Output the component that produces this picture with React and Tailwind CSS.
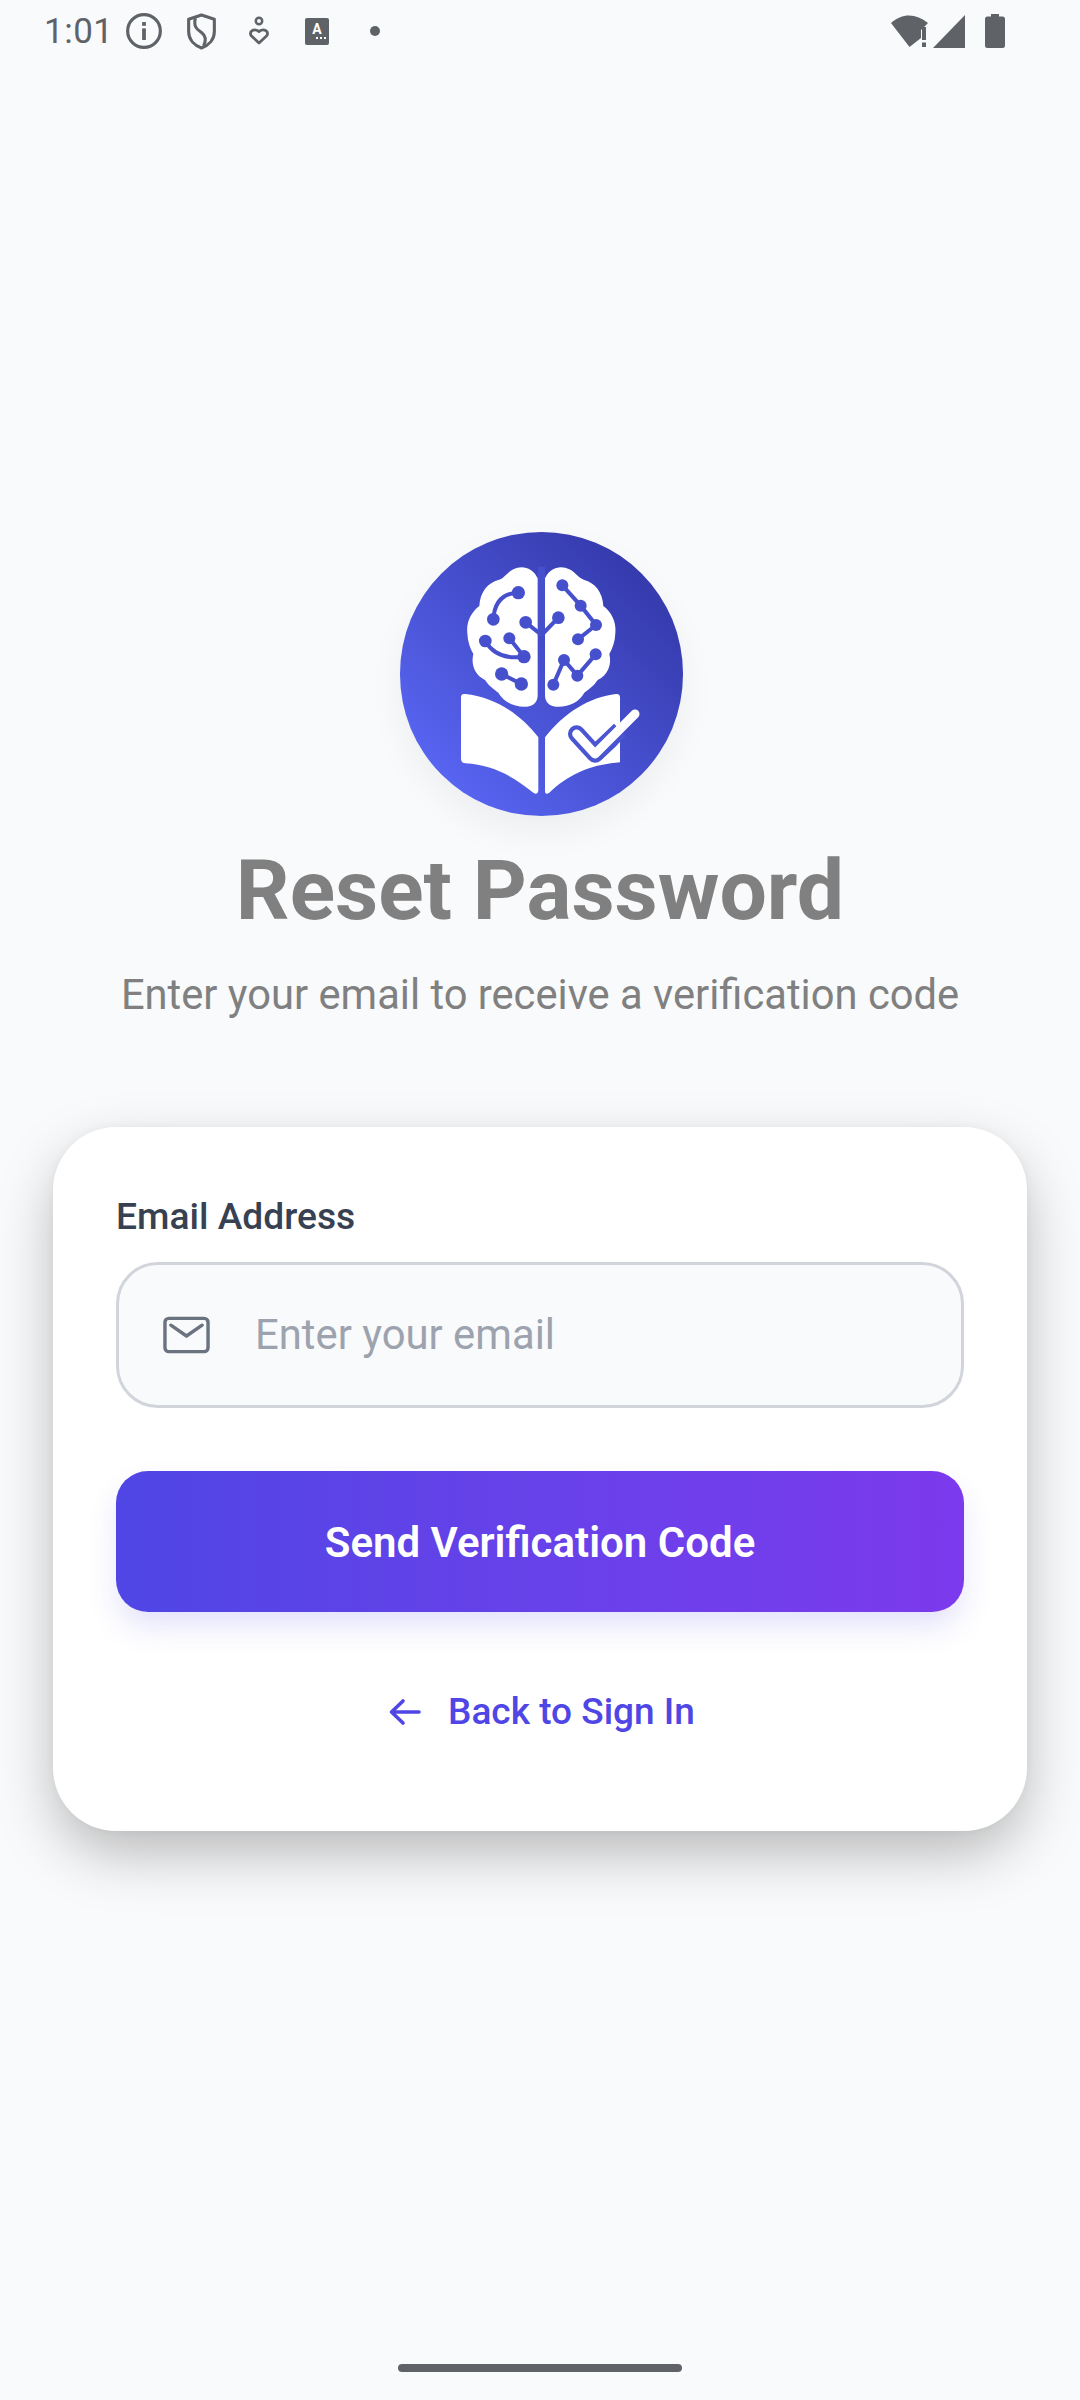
import React from 'react';

const roboto = { fontFamily: 'Roboto, sans-serif' };

// Android status bar glyphs
const StatusBar = () => (
	<div className="flex items-center h-[62px] pl-[44px] pr-[75px] text-[#5f6368]">
		<span className="text-[35px] leading-none tracking-[0.5px] w-[81px]">1:01</span>
		<svg width="38" height="38" viewBox="0 0 36 36">
			<circle cx="18" cy="18" r="15.5" fill="none" stroke="currentColor" strokeWidth="3" />
			<rect x="16.2" y="15.5" width="3.6" height="11" fill="currentColor" />
			<rect x="16.2" y="9.5" width="3.6" height="3.6" fill="currentColor" />
		</svg>
		<svg width="31" height="37" viewBox="0 0 30 36" className="ml-[23px]">
			<path d="M15 2 L27.5 6 V18 C27.5 26 22 31.5 15 34 C8 31.5 2.5 26 2.5 18 V6 Z" fill="none" stroke="currentColor" strokeWidth="3" strokeLinejoin="round" />
			<path d="M9 5 C7 14 11 16 15 19 C19 22 20 26 17 32" fill="none" stroke="currentColor" strokeWidth="3" />
		</svg>
		<svg width="20" height="30" viewBox="0 0 20 30" className="ml-[32px]">
			<circle cx="10" cy="5" r="3.2" fill="none" stroke="currentColor" strokeWidth="2.5" />
			<path d="M10 27 L2 19.5 C0 15 5 12 10 15.5 C15 12 20 15 18 19.5 Z" fill="none" stroke="currentColor" strokeWidth="2.8" strokeLinejoin="round" />
		</svg>
		<div className="ml-[36px] w-[24px] h-[27px] rounded-[2px] bg-current flex flex-col items-center justify-center">
			<span className="text-white text-[14px] leading-none font-bold -mt-[2px]">A</span>
			<span className="w-[10px] h-[2px] mt-[1px] ml-[8px] border-t-2 border-dotted border-white" />
		</div>
		<div className="ml-[41px] w-[10px] h-[10px] rounded-full bg-current" />
		<div className="flex-1" />
		<svg width="40" height="34" viewBox="0 0 40 34">
			<path d="M1 9 C12 -1 26 -1 38 9 L31 16 V24 L19.5 33 Z" fill="currentColor" />
			<rect x="32" y="13" width="4" height="13" fill="currentColor" />
			<rect x="32" y="28.5" width="4" height="4.5" fill="currentColor" />
		</svg>
		<svg width="32" height="33" viewBox="0 0 32 33" className="ml-[3px]">
			<path d="M32 0 V33 H0 Z" fill="currentColor" />
		</svg>
		<svg width="20" height="34" viewBox="0 0 20 34" className="ml-[20px]">
			<path d="M6 0 H14 V2.5 H17.5 Q20 2.5 20 5 V31.5 Q20 34 17.5 34 H2.5 Q0 34 0 31.5 V5 Q0 2.5 2.5 2.5 H6 Z" fill="currentColor" />
		</svg>
	</div>
);

// App logo, drawn in the 960 unit space of the crop around the circle
const Logo = () => {
	const lobes = 'C458 172 425 165 400 178 C380 188 372 205 355 210 C325 218 300 245 298 288 C275 305 258 335 262 370 C263 395 270 415 280 432 C272 465 285 495 315 510 C328 530 345 540 355 548 C370 575 400 592 440 590 C462 588 473 575 473 555';
	return (
		<div className="ml-[2px] w-[283px] h-[284px] rounded-full bg-gradient-to-tr from-[#5f6dff] to-[#2f329f] shadow-[0_16px_36px_rgba(0,0,0,0.05)]">
			<svg width="283" height="284" viewBox="60 66 849 852">
				<g fill="#fff">
					<path d={`M473 205 ${lobes} Z`} />
					<path d={`M473 205 ${lobes} Z`} transform="translate(968 0) scale(-1 1)" />
					<path d="M243 562 Q243 550 256 552 C340 560 420 610 475 682 L475 842 Q473 856 460 848 C400 800 340 765 256 760 Q243 758 243 746 Z" />
					<path d="M495 682 C550 610 630 560 708 552 Q720 551 720 562 L720 757 C620 765 560 800 508 848 Q495 856 495 842 Z" />
				</g>
				<g fill="none" stroke="#4650cc" strokeWidth="12">
					<path d="M415 248 Q345 250 340 328" />
					<path d="M437 337 L485 375 L535 323" />
					<path d="M316 393 Q350 452 432 440 L388 385" />
					<path d="M365 492 L424 522" />
					<path d="M547 226 L602 287 L648 345 L594 388" />
					<path d="M520 524 L552 450 L592 497 L647 433" />
				</g>
				<g fill="#4650cc">
					<circle cx="415" cy="248" r="20" />
					<circle cx="340" cy="328" r="19" />
					<circle cx="437" cy="337" r="19" />
					<circle cx="535" cy="323" r="19" />
					<circle cx="316" cy="393" r="19" />
					<circle cx="388" cy="385" r="18" />
					<circle cx="432" cy="440" r="20" />
					<circle cx="365" cy="492" r="20" />
					<circle cx="424" cy="522" r="20" />
					<circle cx="547" cy="226" r="18" />
					<circle cx="602" cy="287" r="18" />
					<circle cx="648" cy="345" r="18" />
					<circle cx="594" cy="388" r="18" />
					<circle cx="520" cy="524" r="18" />
					<circle cx="552" cy="450" r="18" />
					<circle cx="592" cy="497" r="18" />
					<circle cx="647" cy="433" r="18" />
				</g>
				<rect x="474" y="170" width="21" height="200" fill="#4650cc" />
				<path d="M590 672 L645 732 L690 690" fill="none" stroke="#4a55d2" strokeWidth="52" strokeLinecap="round" strokeLinejoin="round" />
				<path d="M645 732 L720 660" fill="none" stroke="#4a55d2" strokeWidth="52" />
				<path d="M590 672 L645 732 L765 612" fill="none" stroke="#fff" strokeWidth="27" strokeLinecap="round" strokeLinejoin="round" />
			</svg>
		</div>
	);
};

const ResetCard = () => (
	<div className="mx-[53px] mt-[104px] h-[704px] rounded-[63px] bg-white px-[63px] pt-[67px] shadow-[0_24px_60px_-4px_rgba(0,0,0,0.28),0_0_10px_rgba(0,0,0,0.04)]">
		<label className="block text-[37.2px] leading-[44px] font-medium text-[#374151]">Email Address</label>
		<div className="mt-[24px] h-[146px] rounded-[42px] border-[3px] border-[#d1d5db] bg-[#f9fafb] flex items-center pl-[44px]">
			<svg width="47" height="38" viewBox="0 0 48 38">
				<rect x="2" y="2" width="44" height="34" rx="4" fill="none" stroke="#6b7280" strokeWidth="3.5" />
				<path d="M8 9 L24 20 L40 9" fill="none" stroke="#6b7280" strokeWidth="3.5" strokeLinecap="round" strokeLinejoin="round" />
			</svg>
			<span className="ml-[45px] text-[41.8px] text-[#9ca3af]">Enter your email</span>
		</div>
		<button className="mt-[63px] w-full h-[141px] pt-[2px] rounded-[32px] bg-gradient-to-r from-[#4f46e5] to-[#7c3aed] text-white text-[42px] font-semibold shadow-[0_16px_32px_-4px_rgba(79,70,229,0.18)]">
			Send Verification Code
		</button>
		<div className="mt-[63px] flex items-center justify-center h-[74px] text-[#4f46e5]">
			<svg width="34" height="28" viewBox="0 0 34 28" className="ml-[3px]">
				<path d="M31 14 H4 M15 3 L3.5 14 L15 25" fill="none" stroke="currentColor" strokeWidth="3.6" strokeLinecap="round" strokeLinejoin="round" />
			</svg>
			<span className="ml-[26px] text-[37px] font-medium">Back to Sign In</span>
		</div>
	</div>
);

export default function App() {
	return (
		<div className="relative h-[2400px] bg-[#f9fafb] overflow-hidden" style={roboto}>
			<StatusBar />
			<div className="flex flex-col items-center pt-[470px]">
				<Logo />
				<h1 className="mt-[20px] text-[84px] leading-[110px] font-bold text-[#808080]">Reset Password</h1>
				<p className="mt-[21px] text-[41.7px] leading-[56px] text-[#808080]">Enter your email to receive a verification code</p>
			</div>
			<ResetCard />
			{/* Gesture bar */}
			<div className="absolute left-[398px] top-[2364px] w-[284px] h-[8px] rounded-full bg-[#5f6368]" />
		</div>
	);
}
